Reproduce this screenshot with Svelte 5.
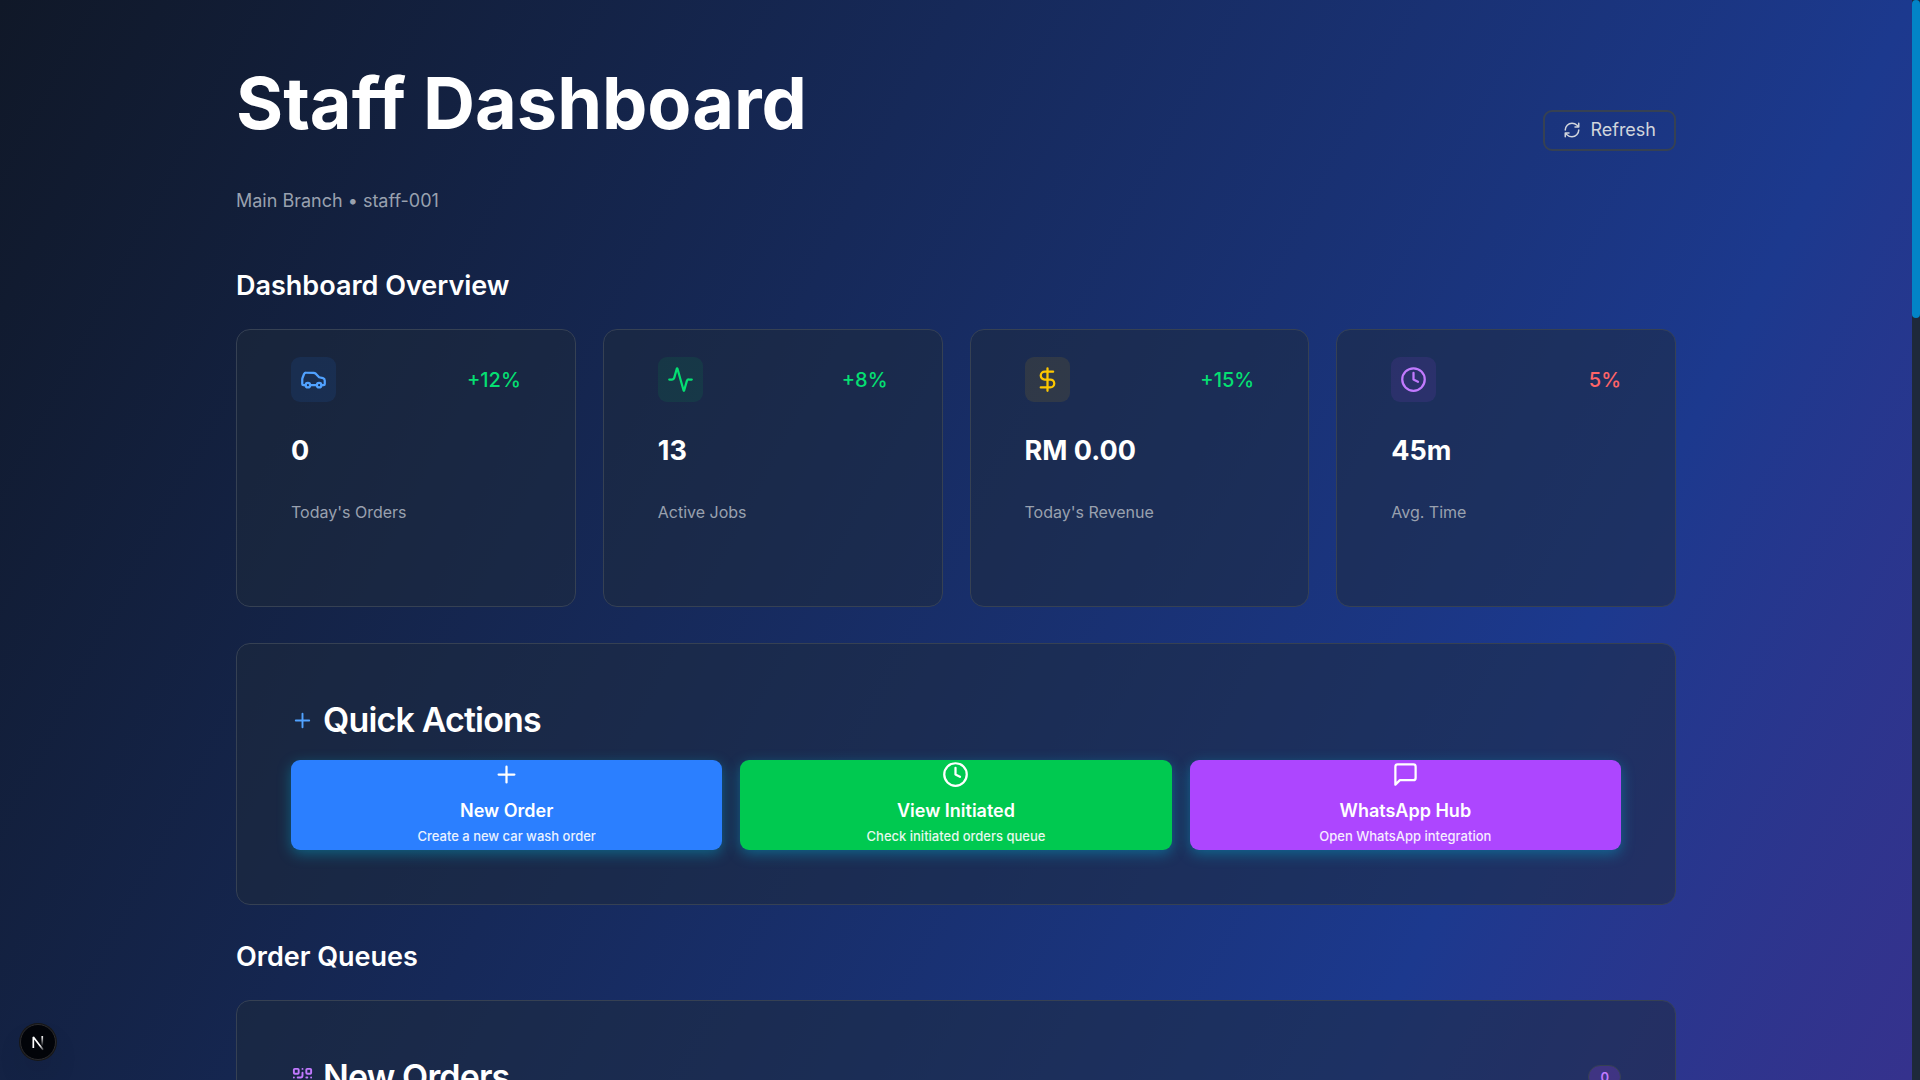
<script>
  const stats = [
    { icon: 'car', tone: 'blue', change: '+12%', up: true, value: '0', label: "Today's Orders" },
    { icon: 'activity', tone: 'green', change: '+8%', up: true, value: '13', label: 'Active Jobs' },
    { icon: 'dollar', tone: 'yellow', change: '+15%', up: true, value: 'RM 0.00', label: "Today's Revenue" },
    { icon: 'clock', tone: 'purple', change: '5%', up: false, value: '45m', label: 'Avg. Time' }
  ];

  const actions = [
    { icon: 'plus', tone: 'blue', title: 'New Order', text: 'Create a new car wash order' },
    { icon: 'clock', tone: 'green', title: 'View Initiated', text: 'Check initiated orders queue' },
    { icon: 'message', tone: 'purple', title: 'WhatsApp Hub', text: 'Open WhatsApp integration' }
  ];
</script>

{#snippet icon(name)}
  <svg class="icon" viewBox="0 0 24 24" aria-hidden="true">
    {#if name === 'car'}
      <path d="M5 17H3a1 1 0 0 1-1-1v-4c0-.6.2-1.300.4-1.800L3.600 7.100A2 2 0 0 1 5.400 6H12c.8 0 1.500.3 2 .8L17 10l3.400.8c.9.2 1.600 1 1.600 2V16a1 1 0 0 1-1 1h-2" />
      <circle cx="7" cy="17" r="2" />
      <path d="M9 17h6" />
      <circle cx="17" cy="17" r="2" />
    {:else if name === 'activity'}
      <path d="M22 12h-2.480a2 2 0 0 0-1.930 1.460l-2.350 8.360a.25.25 0 0 1-.480 0L9.240 2.180a.25.25 0 0 0-.480 0l-2.350 8.360A2 2 0 0 1 4.490 12H2" />
    {:else if name === 'dollar'}
      <path d="M12 2v20M17 5H9.500a3.500 3.500 0 0 0 0 7h5a3.500 3.500 0 0 1 0 7H6" />
    {:else if name === 'clock'}
      <circle cx="12" cy="12" r="10" />
      <path d="M12 6v6l4 2" />
    {:else if name === 'plus'}
      <path d="M5 12h14M12 5v14" />
    {:else if name === 'message'}
      <path d="M21 15a2 2 0 0 1-2 2H7l-4 4V5a2 2 0 0 1 2-2h14a2 2 0 0 1 2 2z" />
    {:else if name === 'refresh'}
      <path d="M3 12a9 9 0 0 1 9-9 9.750 9.750 0 0 1 6.740 2.740L21 8M21 3v5h-5M21 12a9 9 0 0 1-9 9 9.750 9.750 0 0 1-6.740-2.740L3 16M8 16H3v5" />
    {:else if name === 'qr'}
      <rect x="3" y="3" width="5" height="5" rx="1" />
      <rect x="16" y="3" width="5" height="5" rx="1" />
      <rect x="3" y="16" width="5" height="5" rx="1" />
      <path d="M21 16h-3a2 2 0 0 0-2 2v3M21 21v.01M12 7v3a2 2 0 0 1-2 2H7M3 12h.01M12 3h.01M12 16v.01M16 12h1M21 12v.01M12 21v-1" />
    {/if}
  </svg>
{/snippet}

<div class="shell">
  <main class="page">
    <header class="top">
      <div>
        <h1>Staff Dashboard</h1>
        <p>Main Branch • staff-001</p>
      </div>
      <button class="refresh" type="button">{@render icon('refresh')}Refresh</button>
    </header>

    <section class="overview">
      <h2>Dashboard Overview</h2>
      <div class="stats">
        {#each stats as s}
          <article class="card stat">
            <div class="stat-head">
              <span class="tile {s.tone}">{@render icon(s.icon)}</span>
              <span class={s.up ? 'change up' : 'change down'}>{s.change}</span>
            </div>
            <p class="value">{s.value}</p>
            <p class="label">{s.label}</p>
          </article>
        {/each}
      </div>
    </section>

    <section class="card panel">
      <h3><span class="lead add">{@render icon('plus')}</span>Quick Actions</h3>
      <div class="actions">
        {#each actions as a}
          <button class="action {a.tone}" type="button">
            {@render icon(a.icon)}
            <span class="action-title">{a.title}</span>
            <span class="action-text">{a.text}</span>
          </button>
        {/each}
      </div>
    </section>

    <section class="queues">
      <h2>Order Queues</h2>
      <div class="card panel">
        <div class="panel-head">
          <h3><span class="lead scan">{@render icon('qr')}</span>New Orders</h3>
          <span class="count">0</span>
        </div>
      </div>
    </section>
  </main>

  <div class="track"><div class="thumb"></div></div>

  <button class="dev" type="button" aria-label="Open developer tools">
    <svg viewBox="0 0 40 40" aria-hidden="true">
      <defs>
        <linearGradient id="slant" x1="17" y1="17" x2="27" y2="31" gradientUnits="userSpaceOnUse">
          <stop offset="0.5" stop-color="#fff" />
          <stop offset="1" stop-color="#fff" stop-opacity="0" />
        </linearGradient>
        <linearGradient id="stem" x1="0" y1="13" x2="0" y2="25" gradientUnits="userSpaceOnUse">
          <stop offset="0" stop-color="#fff" />
          <stop offset="1" stop-color="#fff" stop-opacity="0" />
        </linearGradient>
      </defs>
      <path d="M14.500 27V14L26 29" fill="none" stroke="url(#slant)" stroke-width="2" stroke-linejoin="bevel" />
      <path d="M25 13v12" fill="none" stroke="url(#stem)" stroke-width="2" />
    </svg>
  </button>
</div>

<style>
  :global(body) {
    margin: 0;
    background: #101828;
  }

  .shell {
    display: grid;
    grid-template-columns: minmax(0, 1fr) 8px;
    height: 100vh;
    overflow: hidden;
    font-family: Inter, 'Liberation Sans', sans-serif;
    font-size: 18px;
    line-height: 28px;
    color: #fff;
  }

  .page {
    box-sizing: border-box;
    min-height: 0;
    overflow: hidden;
    padding: 36px max(48px, calc(50% - 720px)) 0;
    background: linear-gradient(to bottom right in oklab, #101828, #1c398e, #59168b) 0 0 / 100% 340vh no-repeat;
  }

  h1, h2, h3, p {
    margin: 0;
  }

  button {
    font: inherit;
    color: inherit;
    cursor: pointer;
  }

  .icon {
    display: block;
    flex: none;
    width: 27px;
    height: 27px;
    fill: none;
    stroke: currentColor;
    stroke-width: 2;
    stroke-linecap: round;
    stroke-linejoin: round;
  }

  .top {
    display: flex;
    align-items: center;
    justify-content: space-between;
    margin-bottom: 43px;
  }

  h1 {
    padding: 22px 0 39px;
    font-size: 72px;
    line-height: 90px;
    font-weight: 700;
  }

  .top p {
    padding-bottom: 10px;
    color: #99a1af;
  }

  .refresh {
    display: flex;
    align-items: center;
    gap: 9px;
    padding: 4px 18px 5px;
    border: 2px solid #364153;
    border-radius: 9px;
    background: transparent;
    color: #d1d5dc;
  }

  .refresh .icon {
    width: 18px;
    height: 18px;
  }

  h2 {
    margin-bottom: 25px;
    font-size: 27px;
    line-height: 36px;
    font-weight: 600;
  }

  .overview {
    margin-bottom: 36px;
  }

  .stats {
    display: grid;
    grid-template-columns: repeat(4, minmax(0, 1fr));
    gap: 27px;
  }

  .card {
    border: 1px solid #364153;
    border-radius: 14px;
    background: rgb(30 41 57 / 50%);
    background-clip: padding-box;
  }

  .stat {
    padding: 27px 54px 82px;
  }

  .stat-head {
    display: flex;
    align-items: center;
    justify-content: space-between;
    margin-bottom: 31px;
  }

  .tile {
    padding: 9px;
    border-radius: 9px;
  }

  .tile.blue { color: #51a2ff; background: rgb(43 127 255 / 10%); }
  .tile.green { color: #05df72; background: rgb(0 201 80 / 10%); }
  .tile.yellow { color: #fdc700; background: rgb(240 177 0 / 10%); }
  .tile.purple { color: #c27aff; background: rgb(173 70 255 / 10%); }

  .change {
    font-size: 20px;
    font-weight: 500;
  }

  .up { color: #05df72; }
  .down { color: #ff6467; }

  .value {
    margin-bottom: 31px;
    font-size: 27px;
    line-height: 36px;
    font-weight: 700;
  }

  .label {
    font-size: 16px;
    line-height: 24px;
    color: #99a1af;
  }

  .panel {
    padding: 55px 54px 54px;
  }

  .panel-head {
    display: flex;
    align-items: center;
    justify-content: space-between;
  }

  h3 {
    display: flex;
    align-items: center;
    gap: 9px;
    font-size: 34px;
    line-height: 42px;
    font-weight: 600;
    letter-spacing: -0.025em;
  }

  .lead .icon {
    width: 23px;
    height: 23px;
  }

  .add { color: #51a2ff; }
  .scan { color: #c27aff; }

  .actions {
    display: grid;
    grid-template-columns: repeat(3, minmax(0, 1fr));
    gap: 18px;
    margin-top: 19px;
  }

  .action {
    display: flex;
    flex-direction: column;
    align-items: center;
    height: 90px;
    padding: 1px 18px 0;
    border: 0;
    border-radius: 9px;
    box-shadow: 0 4px 14px rgb(0 184 219 / 40%);
  }

  .action.blue { background: #2b7fff; }
  .action.green { background: #00c950; }
  .action.purple { background: #ad46ff; }

  .action-title {
    margin-top: 9px;
    font-weight: 600;
  }

  .action-text {
    font-size: 13px;
    line-height: 22px;
    font-weight: 500;
    opacity: 0.9;
  }

  .queues {
    margin-top: 34px;
  }

  .count {
    padding: 2px 11px;
    border: 1px solid #364153;
    border-radius: 14px;
    font-size: 13px;
    line-height: 18px;
    font-weight: 600;
    color: #c27aff;
    background: rgb(173 70 255 / 20%);
  }

  .track {
    background: #1e293b;
  }

  .thumb {
    height: 318px;
    border-radius: 4px;
    background: #0284c7;
  }

  .dev {
    position: fixed;
    left: 20px;
    bottom: 20px;
    width: 36px;
    height: 36px;
    padding: 0;
    border: 1px solid #2b2b2f;
    border-radius: 50%;
    background: #020409;
    box-shadow: 0 0 0 1px #171717, 0 16px 32px -8px rgb(0 0 0 / 24%);
  }

  .dev svg {
    display: block;
    width: 100%;
    height: 100%;
  }
</style>
